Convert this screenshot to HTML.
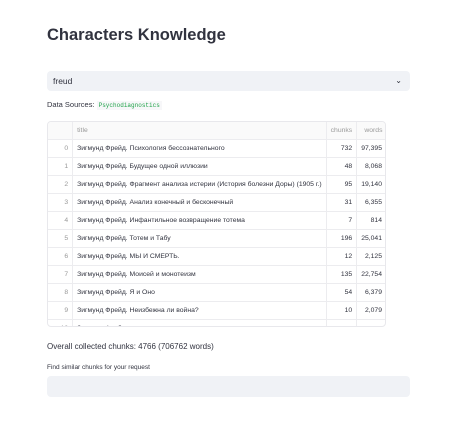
<!DOCTYPE html><html><head><style>
body{margin:0;background:#fff;font-family:"Liberation Sans",sans-serif;color:#31333f;width:452px;height:422px;overflow:hidden;position:relative}
.a{position:absolute}
h1{position:absolute;left:47px;top:26px;margin:0;font-size:16.5px;font-weight:bold;color:#31333f}
.sel{left:47px;top:71px;width:363px;height:20px;background:#f0f2f6;border-radius:4px;font-size:8.5px;line-height:20px}
.tbl{left:47px;top:121px;width:339px;height:206px;border:1px solid #e8e8ec;border-radius:4px;overflow:hidden;box-sizing:border-box}
table{border-collapse:collapse;font-size:6.8px;width:339px}
td{height:17px;border-bottom:1px solid #ececef;border-right:1px solid #ececef;padding:0 4px;white-space:nowrap}
td.i{width:18px;text-align:right;color:#999;padding-right:4px}
td.n{text-align:right;width:20px}
tr.h td{color:#999;background:#fafafa}
</style></head><body>
<h1>Characters Knowledge</h1>
<div class="a sel"><span style="padding-left:6px">freud</span><span style="position:absolute;right:8px;font-size:8px">&#8964;</span></div>
<div class="a" style="left:47px;top:100px;font-size:7.5px">Data Sources: <span style="font-family:'Liberation Mono',monospace;color:#21a34a;font-size:6px;background:#f7f7f9;padding:1px 2px">Psychodiagnostics</span></div>
<div class="a tbl"><table>
<tr class="h"><td class="i"></td><td>title</td><td class="n">chunks</td><td class="n" style="border-right:0">words</td></tr>
<tr><td class="i">0</td><td>Зигмунд Фрейд. Психология бессознательного</td><td class="n">732</td><td class="n">97,395</td></tr>
<tr><td class="i">1</td><td>Зигмунд Фрейд. Будущее одной иллюзии</td><td class="n">48</td><td class="n">8,068</td></tr>
<tr><td class="i">2</td><td>Зигмунд Фрейд. Фрагмент анализа истерии (История болезни Доры) (1905 г.)</td><td class="n">95</td><td class="n">19,140</td></tr>
<tr><td class="i">3</td><td>Зигмунд Фрейд. Анализ конечный и бесконечный</td><td class="n">31</td><td class="n">6,355</td></tr>
<tr><td class="i">4</td><td>Зигмунд Фрейд. Инфантильное возвращение тотема</td><td class="n">7</td><td class="n">814</td></tr>
<tr><td class="i">5</td><td>Зигмунд Фрейд. Тотем и Табу</td><td class="n">196</td><td class="n">25,041</td></tr>
<tr><td class="i">6</td><td>Зигмунд Фрейд. МЫ И СМЕРТЬ.</td><td class="n">12</td><td class="n">2,125</td></tr>
<tr><td class="i">7</td><td>Зигмунд Фрейд. Моисей и монотеизм</td><td class="n">135</td><td class="n">22,754</td></tr>
<tr><td class="i">8</td><td>Зигмунд Фрейд. Я и Оно</td><td class="n">54</td><td class="n">6,379</td></tr>
<tr><td class="i">9</td><td>Зигмунд Фрейд. Неизбежна ли война?</td><td class="n">10</td><td class="n">2,079</td></tr>
<tr><td class="i">10</td><td>Зигмунд Фрейд.</td><td class="n"></td><td class="n"></td></tr>
</table></div>
<div class="a" style="left:47px;top:342px;font-size:8px">Overall collected chunks: 4766 (706762 words)</div>
<div class="a" style="left:47px;top:364px;font-size:6.5px">Find similar chunks for your request</div>
<div class="a" style="left:47px;top:376px;width:363px;height:21px;background:#f0f2f6;border-radius:4px"></div>
</body></html>
